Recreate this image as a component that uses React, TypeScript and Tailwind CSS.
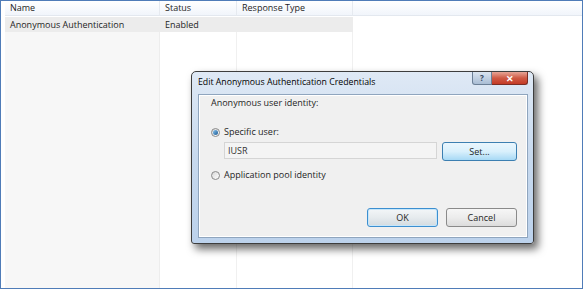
import React from "react";

const font = { fontFamily: '"Open Sans", "Noto Sans", sans-serif' };

const Radio = ({ checked }: { checked?: boolean }) => (
  <span className="w-[9px] h-[9px] rounded-full border border-[#8a8a8a] bg-gradient-to-br from-[#d8d8d8] to-[#ffffff] flex items-center justify-center shrink-0">
    {checked && (
      <span className="w-[5px] h-[5px] rounded-full bg-gradient-to-br from-[#86c4ef] to-[#1c5b93]" />
    )}
  </span>
);

const App: React.FC = () => {
  return (
    <div
      className="relative w-[583px] h-[289px] border border-[#4f7cb8] bg-white overflow-hidden text-[9px] text-[#1e1e1e]"
      style={font}
    >
      {/* list view */}
      <div className="flex h-full pl-[4px]">
        <div className="w-[155px] flex flex-col">
          <div className="h-[15px] pl-[5px] flex items-center bg-gradient-to-b from-[#ffffff] to-[#f1f5fb] border-b border-[#e3e8ef] border-r border-r-[#e6eaf0]">
            Name
          </div>
          <div className="h-[15px] mt-[1px] pl-[5px] flex items-center bg-[#ececec]">
            Anonymous Authentication
          </div>
          <div className="flex-1 bg-[#f7f7f7] border-r border-[#ededed]" />
        </div>
        <div className="w-[77px] flex flex-col">
          <div className="h-[15px] pl-[5px] flex items-center bg-gradient-to-b from-[#ffffff] to-[#f1f5fb] border-b border-[#e3e8ef] border-r border-r-[#e6eaf0]">
            Status
          </div>
          <div className="h-[15px] mt-[1px] pl-[5px] flex items-center bg-[#ececec]">
            Enabled
          </div>
          <div className="flex-1 border-r border-[#f0f0f0]" />
        </div>
        <div className="w-[116px] flex flex-col">
          <div className="h-[15px] pl-[5px] flex items-center bg-gradient-to-b from-[#ffffff] to-[#f1f5fb] border-b border-[#e3e8ef] border-r border-r-[#e6eaf0]">
            Response Type
          </div>
          <div className="h-[15px] mt-[1px] bg-[#ececec]" />
          <div className="flex-1 border-r border-[#f0f0f0]" />
        </div>
        <div className="flex-1 flex flex-col">
          <div className="h-[15px] bg-gradient-to-b from-[#ffffff] to-[#f1f5fb] border-b border-[#e3e8ef]" />
        </div>
      </div>

      {/* dialog */}
      <div className="absolute left-[190px] top-[70px] w-[343px] h-[173px] rounded-t-[5px] rounded-b-[3px] border border-[#3d3d3d] bg-gradient-to-b from-[#dfe9f5] via-[#c7d9ee] to-[#bcd2ec] shadow-[4px_5px_8px_rgba(0,0,0,0.6)] flex flex-col pl-[6px] pr-[5px] pb-[5px]">
        <div className="h-[22px] flex items-center justify-between">
          <span className="text-[8.75px] text-black">
            Edit Anonymous Authentication Credentials
          </span>
          <div className="flex self-start">
            <div className="w-[20px] h-[13px] rounded-bl-[3px] border border-[#6b7f96] border-t-0 bg-gradient-to-b from-[#dbe5f0] to-[#a9bdd4] flex items-center justify-center text-[8px] text-[#33475e] font-bold">
              ?
            </div>
            <div className="w-[36px] h-[13px] rounded-br-[3px] border border-[#7a2d24] border-t-0 border-l-0 bg-gradient-to-b from-[#e6a597] via-[#cf5a45] to-[#c43a25] flex items-center justify-center text-white text-[9px] font-bold leading-none">
              ✕
            </div>
          </div>
        </div>
        <div className="flex-1 border border-[#8fa5be] bg-[#f0f0f0] shadow-[inset_0_0_0_1px_#ffffff] flex flex-col pl-[12px] pr-[10px] pt-[1px]">
          <div className="h-[14px] flex items-center">Anonymous user identity:</div>
          <div className="mt-[15px] h-[14px] flex items-center gap-[4px]">
            <Radio checked />
            <span>Specific user:</span>
          </div>
          <div className="mt-[3px] pl-[13px] flex gap-[5px]">
            <div className="flex-1 h-[17px] border border-[#d5d5d5] bg-[#f4f4f4] flex items-center pl-[3px] text-[#333]">
              IUSR
            </div>
            <div className="w-[75px] h-[19px] rounded-[3px] border border-[#3c7fb1] bg-gradient-to-b from-[#eaf6fd] via-[#d9f0fc] to-[#a7d9f5] flex items-center justify-center">
              Set...
            </div>
          </div>
          <div className="mt-[7px] h-[14px] flex items-center gap-[4px]">
            <Radio />
            <span>Application pool identity</span>
          </div>
          <div className="mt-[26px] flex justify-end gap-[8px]">
            <div className="w-[71px] h-[19px] rounded-[3px] border border-[#3c8fd0] bg-gradient-to-b from-[#f3f6f8] via-[#e6ebee] to-[#d3dbe0] shadow-[inset_0_0_0_1px_#c6e6fa] flex items-center justify-center">
              OK
            </div>
            <div className="w-[71px] h-[19px] rounded-[3px] border border-[#8a8a8a] bg-gradient-to-b from-[#f6f6f6] via-[#ececec] to-[#dcdcdc] flex items-center justify-center">
              Cancel
            </div>
          </div>
        </div>
      </div>
    </div>
  );
};

export default App;
